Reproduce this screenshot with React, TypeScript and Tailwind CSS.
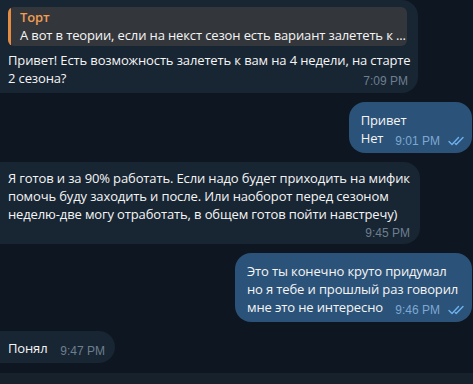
import React from "react";

const Checks = () => (
  <svg width="17" height="10" viewBox="0 0 17 10" fill="none" className="shrink-0">
    <path d="M1 5.5 L4 8.5 L10.5 1.5" stroke="#6cb1ee" strokeWidth="1.4" strokeLinecap="round" strokeLinejoin="round" />
    <path d="M7.2 7.6 L8.2 8.5 L15 1.5" stroke="#6cb1ee" strokeWidth="1.4" strokeLinecap="round" strokeLinejoin="round" />
  </svg>
);

const InTime = ({ t }: { t: string }) => (
  <span className="shrink-0 text-[12px] leading-[14px] tracking-normal text-[#6d7f8f] translate-y-[1px]" style={{ fontFamily: '"Liberation Sans", Arial, sans-serif' }}>
    {t}
  </span>
);

const OutMeta = ({ t }: { t: string }) => (
  <span className="shrink-0 flex items-center gap-[8px] translate-y-[1px]">
    <span className="text-[12px] leading-[14px] tracking-normal text-[#7da8d3]" style={{ fontFamily: '"Liberation Sans", Arial, sans-serif' }}>
      {t}
    </span>
    <Checks />
  </span>
);

export default function App() {
  return (
    <div
      className="h-[384px] w-[473px] overflow-hidden bg-[#0e1621] flex flex-col text-[13px] leading-[18px] tracking-[-0.13px] text-[#f5f5f5]"
      style={{ fontFamily: '"Open Sans", "Noto Sans", sans-serif' }}
    >
      <div className="flex flex-col gap-[9px]">
        {/* B1 */}
        <div className="ml-[-4px] w-[422px] rounded-r-[16px] bg-[#182533] pl-3 pr-[10px] pt-[7px] pb-[6px]">
          <div className="mr-[1px] flex rounded-[6px] bg-[#33373c] overflow-hidden">
            <div className="w-[3px] shrink-0 bg-[#e38c42]" />
            <div className="min-w-0 pl-[9px] pt-[1px] pb-[2px] whitespace-nowrap overflow-hidden">
              <div className="font-semibold text-[#f19d52]">Торт</div>
              <div>А вот в теории, если на некст сезон есть вариант залететь к ...</div>
            </div>
          </div>
          <div className="mt-[5px] whitespace-nowrap">Привет! Есть возможность залететь к вам на 4 недели, на старте</div>
          <div className="flex items-end justify-between">
            <span>2 сезона?</span>
            <InTime t="7:09 PM" />
          </div>
        </div>

        {/* B2 */}
        <div className="self-end mr-[1px] rounded-[16px] bg-[#2b5278] pl-3 pr-[7px] pt-[9px] pb-[6px]">
          <div>Привет</div>
          <div className="flex items-end gap-[12px]">
            <span>Нет</span>
            <OutMeta t="9:01 PM" />
          </div>
        </div>

        {/* B3 */}
        <div className="ml-[-4px] w-[424px] rounded-r-[16px] bg-[#182533] pl-3 pr-[10px] pt-[7px] pb-[5px] whitespace-nowrap">
          <div>Я готов и за 90% работать. Если надо будет приходить на мифик</div>
          <div>помочь буду заходить и после. Или наоборот перед сезоном</div>
          <div>неделю-две могу отработать, в общем готов пойти навстречу)</div>
          <div className="mt-[2px] flex justify-end">
            <InTime t="9:45 PM" />
          </div>
        </div>

        {/* B4 */}
        <div className="self-end mr-[1px] w-[237px] rounded-[16px] bg-[#2b5278] pl-3 pr-[7px] pt-[9px] pb-[6px] whitespace-nowrap">
          <div>Это ты конечно круто придумал</div>
          <div>но я тебе и прошлый раз говорил</div>
          <div className="flex items-end justify-between">
            <span>мне это не интересно</span>
            <OutMeta t="9:46 PM" />
          </div>
        </div>

        {/* B5 */}
        <div className="ml-[-4px] w-[119px] rounded-r-[16px] bg-[#182533] pl-3 pr-[10px] pt-[8px] pb-[6px] whitespace-nowrap">
          <div className="flex items-end justify-between">
            <span>Понял</span>
            <InTime t="9:47 PM" />
          </div>
        </div>
      </div>
      <div className="mt-auto h-[11px] bg-[#17212b]" />
    </div>
  );
}
